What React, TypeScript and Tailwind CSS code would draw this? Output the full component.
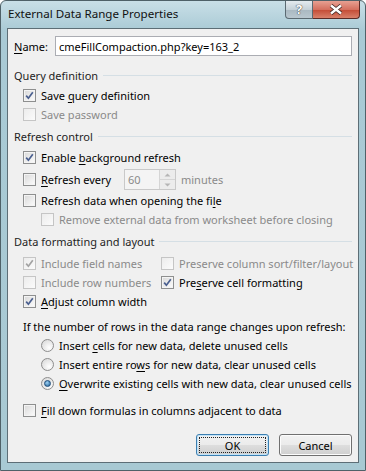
import React from 'react'

const font = {fontFamily: '"Noto Sans", "Open Sans", sans-serif'}

const Check: React.FC<{checked?: boolean; disabled?: boolean}> = ({checked, disabled}) => (
    <span
        className={`w-[13px] h-[13px] shrink-0 border flex items-center justify-center ${
            disabled
                ? 'border-[#c5c5c5] bg-[linear-gradient(135deg,#ececec,#fbfbfb)]'
                : 'border-[#8e8f8f] bg-[linear-gradient(135deg,#d8d8d8,#fdfdfd)] shadow-[inset_0_0_0_1px_#f4f4f4]'
        }`}
    >
        {checked && (
            <svg width="9" height="9" viewBox="0 0 9 9">
                <path
                    d="M1.2 4.6 L3.4 7.2 L7.8 1.2"
                    fill="none"
                    stroke={disabled ? '#a3a3a3' : '#4a5f8f'}
                    strokeWidth="1.7"
                />
            </svg>
        )}
    </span>
)

const Radio: React.FC<{checked?: boolean}> = ({checked}) => (
    <span className="w-[13px] h-[13px] shrink-0 rounded-full border border-[#8d8d8d] bg-[radial-gradient(circle_at_65%_70%,#ffffff,#d4d4d4)] flex items-center justify-center">
        {checked && (
            <span className="w-[7px] h-[7px] rounded-full bg-[radial-gradient(circle_at_40%_35%,#9fd2f5,#1b5e95)] border border-[#1f4d7a]" />
        )}
    </span>
)

const Section: React.FC<{title: string; mt: string}> = ({title, mt}) => (
    <div className={`flex items-center h-[19px] pl-[6px] pr-[6px] ${mt}`}>
        <span className="text-[#1e1e1e] whitespace-nowrap">{title}</span>
        <span className="flex-1 ml-[5px] h-px bg-[#d5dfe5] mt-[-1px]" />
    </div>
)

const U: React.FC<{children: React.ReactNode}> = ({children}) => <span className="underline underline-offset-2">{children}</span>

const Row: React.FC<{children: React.ReactNode; className?: string}> = ({children, className = ''}) => (
    <div className={`flex items-center h-[19px] whitespace-nowrap ${className}`}>{children}</div>
)

const Btn: React.FC<{label: string; primary?: boolean}> = ({label, primary}) => (
    <button
        className={`w-[73px] h-[22px] rounded-[3px] border flex items-center justify-center bg-[linear-gradient(#f2f2f2_0%,#ebebeb_48%,#dddddd_52%,#cfcfcf_100%)] ${
            primary ? 'border-[#3c7fb1] shadow-[inset_0_0_0_1px_#c2e3f8]' : 'border-[#707070] shadow-[inset_0_0_0_1px_#fcfcfc]'
        }`}
    >
        {primary ? (
            <span className="w-[67px] h-[16px] border border-dotted border-[#222] flex items-center justify-center">{label}</span>
        ) : (
            label
        )}
    </button>
)

export default function App() {
    return (
        <div
            style={font}
            className="w-[366px] h-[471px] text-[11px] leading-none text-black bg-[linear-gradient(#c9dfe7,#a9cad5_30px,#a8c9d3)] border border-[#4f6168] rounded-t-[6px] flex flex-col"
        >
            <div className="h-[27px] flex items-start justify-between pl-[7px] pr-[5px]">
                <span className="mt-[7px] text-[11.6px] text-[#111]">External Data Range Properties</span>
                <div className="flex">
                    <div className="w-[28px] h-[18px] rounded-bl-[4px] border border-t-0 border-[#5b6a72] bg-[linear-gradient(#e4ebef,#c5d1d8_50%,#a9b8c1_51%,#b9c7cf)] flex items-center justify-center">
                        <span className="text-white font-bold text-[13px] [text-shadow:0_0_1px_#333,0_0_1px_#333]">?</span>
                    </div>
                    <div className="w-[47px] h-[18px] rounded-br-[4px] border border-t-0 border-l-0 border-[#5b2b26] bg-[linear-gradient(#e7a092,#d4705f_50%,#c34a34_51%,#d9806a)] flex items-center justify-center">
                        <svg width="14" height="11" viewBox="0 0 14 11">
                            <path d="M2 1.5 L12 9.5 M12 1.5 L2 9.5" stroke="#3b2320" strokeWidth="4" />
                            <path d="M2 1.5 L12 9.5 M12 1.5 L2 9.5" stroke="#ffffff" strokeWidth="2.4" />
                        </svg>
                    </div>
                </div>
            </div>

            <div className="mx-[6px] h-[435px] border border-[#5d6e76] bg-[#f0f0f0] flex flex-col pt-[7px]">
                <div className="flex items-center h-[20px] pl-[6px] pr-[6px]">
                    <span className="w-[41px]">
                        <U>N</U>ame:
                    </span>
                    <div className="flex-1 h-[20px] border border-[#abadb3] bg-white flex items-center pl-[3px]">
                        cmeFillCompaction.php?key=163_2
                    </div>
                </div>

                <Section title="Query definition" mt="mt-[10px]" />
                <Row className="pl-[15px] mt-px gap-[5px]">
                    <Check checked />
                    <span>
                        Save <U>q</U>uery definition
                    </span>
                </Row>
                <Row className="pl-[15px] gap-[5px] text-[#8a8a8a]">
                    <Check disabled />
                    <span>Save password</span>
                </Row>

                <Section title="Refresh control" mt="mt-[3px]" />
                <Row className="pl-[15px] mt-[2px] gap-[5px]">
                    <Check checked />
                    <span>
                        Enable <U>b</U>ackground refresh
                    </span>
                </Row>
                <div className="flex items-center h-[21px] pl-[15px] mt-[2px] whitespace-nowrap">
                    <Check />
                    <span className="ml-[5px] w-[83px]">
                        <U>R</U>efresh every
                    </span>
                    <div className="h-[21px] w-[52px] border border-[#c9c9c9] bg-[#f4f4f4] flex">
                        <span className="flex-1 flex items-center pl-[3px] text-[#8a8a8a]">60</span>
                        <span className="w-[16px] flex flex-col border-l border-[#d5d5d5]">
                            <span className="flex-1 flex items-center justify-center border-b border-[#d5d5d5] bg-[#ececec]">
                                <svg width="7" height="4" viewBox="0 0 7 4">
                                    <path d="M0.5 3.5 L3.5 0.5 L6.5 3.5Z" fill="#b5b5b5" />
                                </svg>
                            </span>
                            <span className="flex-1 flex items-center justify-center bg-[#ececec]">
                                <svg width="7" height="4" viewBox="0 0 7 4">
                                    <path d="M0.5 0.5 L3.5 3.5 L6.5 0.5Z" fill="#b5b5b5" />
                                </svg>
                            </span>
                        </span>
                    </div>
                    <span className="ml-[5px] text-[#8a8a8a]">minutes</span>
                </div>
                <Row className="pl-[15px] mt-px gap-[5px]">
                    <Check />
                    <span>
                        Refresh data when opening the fi<U>l</U>e
                    </span>
                </Row>
                <Row className="pl-[33px] gap-[5px] text-[#8a8a8a]">
                    <Check disabled />
                    <span>Remove external data from worksheet before closing</span>
                </Row>

                <Section title="Data formatting and layout" mt="mt-[3px]" />
                <div className="grid grid-cols-[138px_1fr] pl-[15px] mt-[3px]">
                    <Row className="gap-[5px] text-[#8a8a8a]">
                        <Check checked disabled />
                        <span>Include field names</span>
                    </Row>
                    <Row className="gap-[5px] text-[#8a8a8a]">
                        <Check disabled />
                        <span>Preserve column sort/filter/layout</span>
                    </Row>
                    <Row className="gap-[5px] text-[#8a8a8a]">
                        <Check disabled />
                        <span>Include row numbers</span>
                    </Row>
                    <Row className="gap-[5px]">
                        <Check checked />
                        <span>
                            Pre<U>s</U>erve cell formatting
                        </span>
                    </Row>
                    <Row className="gap-[5px] col-span-2">
                        <Check checked />
                        <span>
                            <U>A</U>djust column width
                        </span>
                    </Row>
                </div>

                <Row className="pl-[15px] mt-[6px]">If the number of rows in the data range changes upon refresh:</Row>
                <div className="flex flex-col pl-[33px]">
                    <Row className="gap-[5px]">
                        <Radio />
                        <span>
                            Insert <U>c</U>ells for new data, delete unused cells
                        </span>
                    </Row>
                    <Row className="gap-[5px]">
                        <Radio />
                        <span>
                            Insert entire ro<U>w</U>s for new data, clear unused cells
                        </span>
                    </Row>
                    <Row className="gap-[5px]">
                        <Radio checked />
                        <span>
                            <U>O</U>verwrite existing cells with new data, clear unused cells
                        </span>
                    </Row>
                </div>

                <Row className="pl-[15px] mt-[8px] gap-[5px]">
                    <Check />
                    <span>
                        <U>F</U>ill down formulas in columns adjacent to data
                    </span>
                </Row>

                <div className="flex justify-end gap-[10px] pr-[6px] mt-[14px]">
                    <Btn label="OK" primary />
                    <Btn label="Cancel" />
                </div>
            </div>
        </div>
    )
}
